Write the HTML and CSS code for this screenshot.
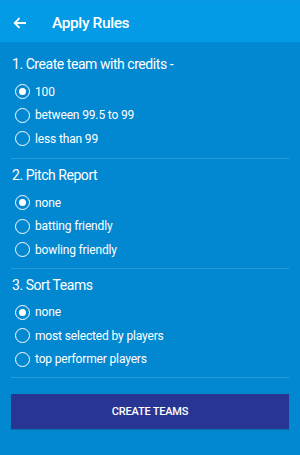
FILE: index.html
```html
<!DOCTYPE html>
<html>
<head>
<meta charset="utf-8">
<link rel="stylesheet" href="styles.css">
</head>
<body>
<header class="appbar">
  <svg class="back" width="14" height="12" viewBox="0 0 14 12"><path d="M13 6H2M6.5 1.2L1.7 6l4.8 4.8" fill="none" stroke="#fff" stroke-width="1.8"/></svg>
  <span class="title">Apply Rules</span>
</header>
<main class="content">
  <section class="group first">
    <div class="group-title">1. Create team with credits -</div>
    <div class="opts">
      <label class="opt"><span class="radio on"></span>100</label>
      <label class="opt"><span class="radio"></span>between 99.5 to 99</label>
      <label class="opt"><span class="radio"></span>less than 99</label>
    </div>
  </section>
  <section class="group">
    <div class="group-title">2. Pitch Report</div>
    <div class="opts">
      <label class="opt"><span class="radio on"></span>none</label>
      <label class="opt"><span class="radio"></span>batting friendly</label>
      <label class="opt"><span class="radio"></span>bowling friendly</label>
    </div>
  </section>
  <section class="group">
    <div class="group-title">3. Sort Teams</div>
    <div class="opts">
      <label class="opt"><span class="radio on"></span>none</label>
      <label class="opt"><span class="radio"></span>most selected by players</label>
      <label class="opt"><span class="radio"></span>top performer players</label>
    </div>
  </section>
  <div class="action">
    <button class="btn">CREATE TEAMS</button>
  </div>
</main>
</body>
</html>
```
FILE: styles.css
```css
html, body {
  margin: 0;
  padding: 0;
  height: 100%;
}
body {
  background: #0288d1;
  font-family: Roboto, "Noto Sans", sans-serif;
  color: #fff;
}
.appbar {
  height: 42px;
  background: #039be5;
  border-top: 1px solid #0896de;
  box-sizing: border-box;
  display: flex;
  align-items: center;
  padding-left: 13px;
}
.back {
  display: block;
  margin-top: 2px;
}
.title {
  margin-left: 25px;
  font-size: 15.5px;
  font-weight: 500;
  letter-spacing: -0.4px;
  margin-top: 2px;
}
.content {
  padding: 5px 11px 0 11px;
}
.group {
  padding: 6px 0 6px 0;
  border-bottom: 1px solid #2c9ad8;
  height: 109.5px;
  box-sizing: border-box;
}
.group.first {
  padding-top: 7px;
  height: 112px;
}
.group-title {
  height: 20px;
  line-height: 20px;
  font-size: 14px;
  letter-spacing: -0.45px;
  padding-left: 1px;
}
.opts {
  margin-top: 6px;
  display: flex;
  flex-direction: column;
}
.opt {
  height: 23.5px;
  display: flex;
  align-items: center;
  font-size: 12px;
  letter-spacing: -0.15px;
}
.radio {
  width: 15px;
  height: 15px;
  border: 1.9px solid #fff;
  border-radius: 50%;
  box-sizing: border-box;
  margin-left: 4px;
  margin-right: 5px;
  display: flex;
  align-items: center;
  justify-content: center;
}
.radio.on::after {
  content: "";
  width: 7px;
  height: 7px;
  border-radius: 50%;
  background: #fff;
}
.action {
  padding-top: 16px;
}
.btn {
  display: block;
  width: 278px;
  height: 35px;
  background: #283593;
  border: none;
  color: #fff;
  font-family: Roboto, sans-serif;
  font-weight: 500;
  font-size: 11px;
  letter-spacing: -0.2px;
  box-shadow: 1px 0 0 #3a6fc0, 0 1px 1px rgba(0,0,0,0.15);
}
```
